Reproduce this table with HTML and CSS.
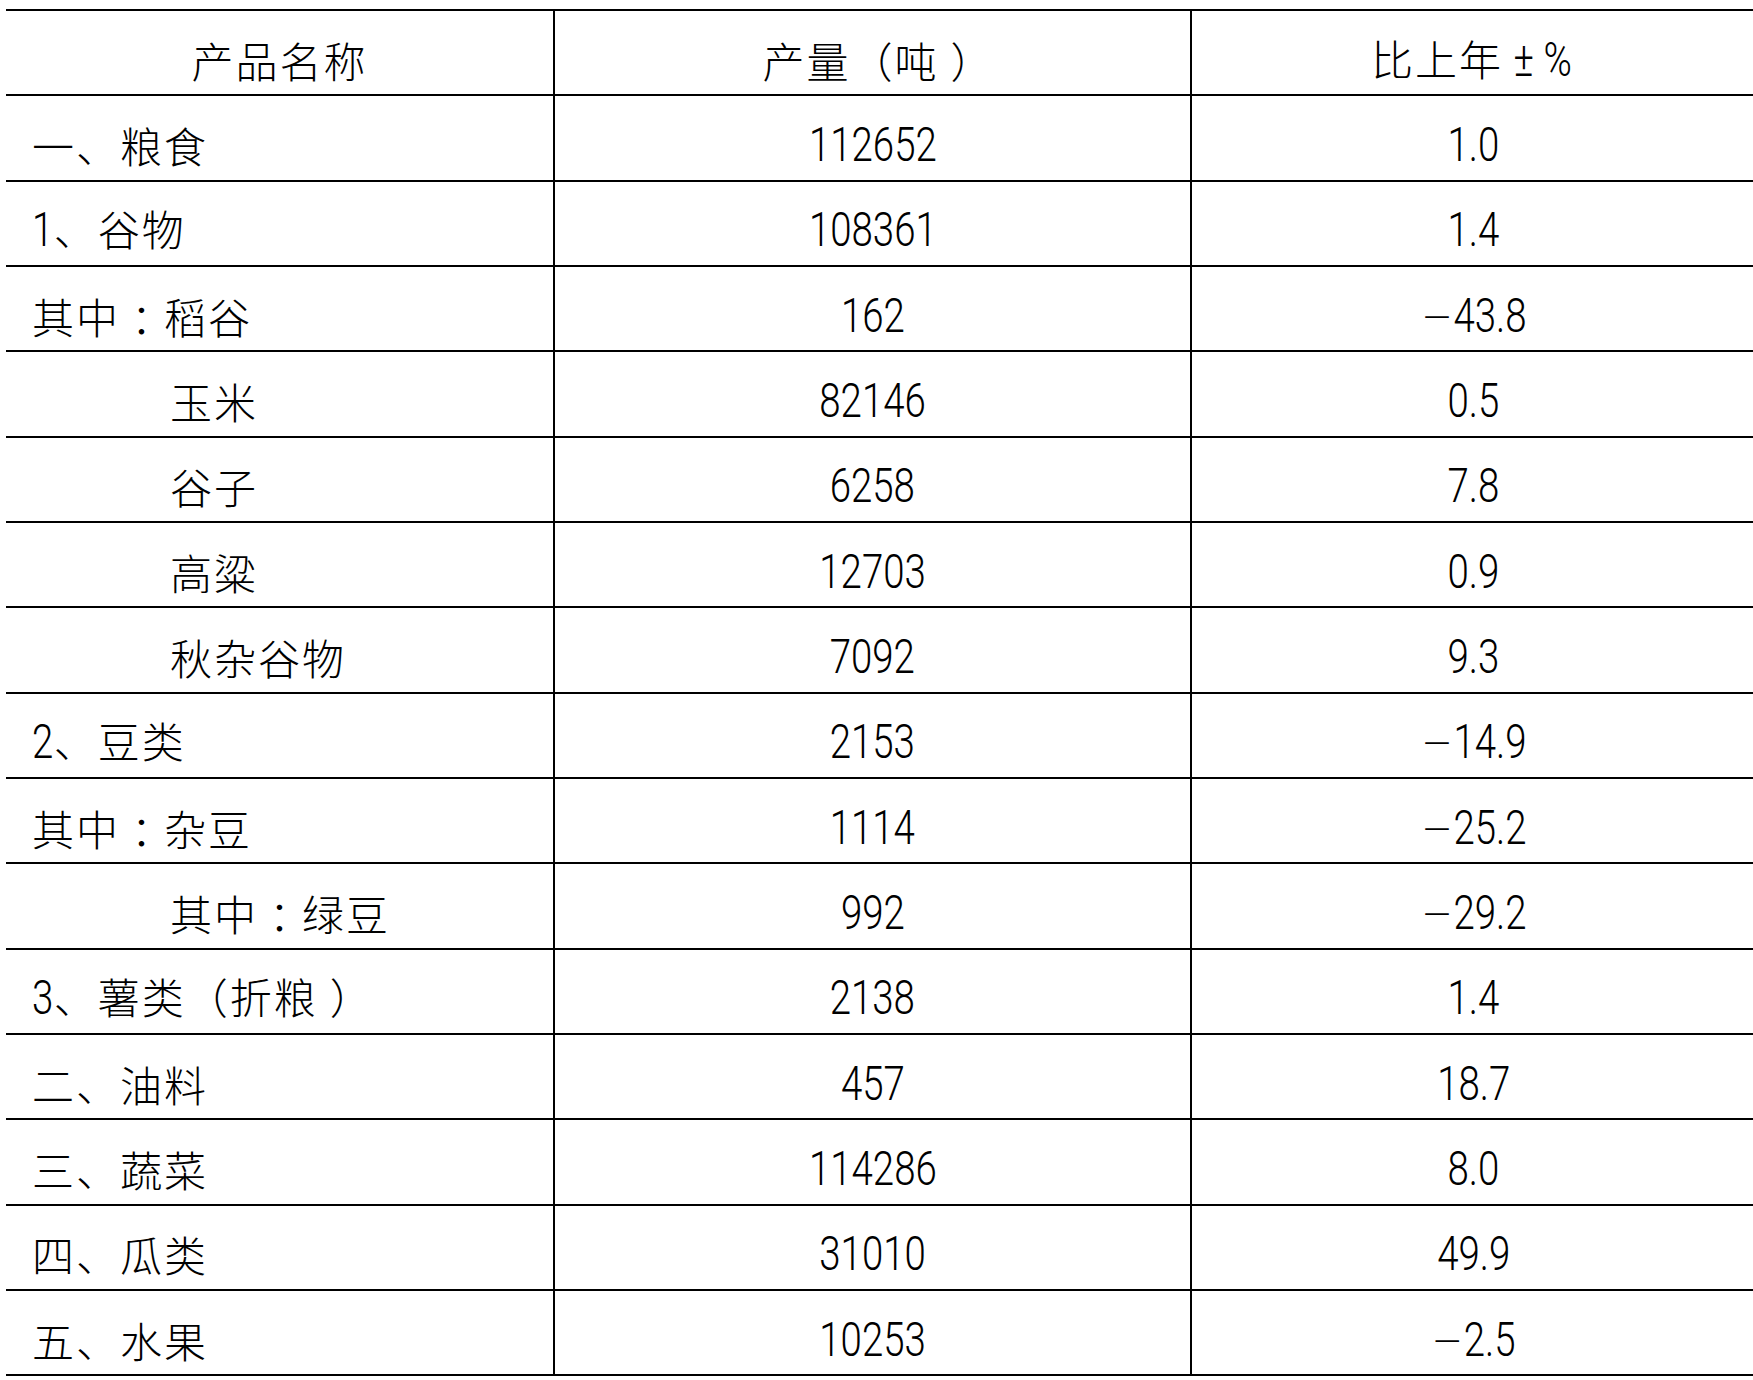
FILE: index.html
```html
<!DOCTYPE html>
<html lang="zh-CN">
<head>
<meta charset="utf-8">
<title>主要农产品产量</title>
<link rel="stylesheet" href="styles.css">
</head>
<body>
<table class="stats">
  <colgroup>
    <col class="c-name">
    <col class="c-qty">
    <col class="c-pct">
  </colgroup>
  <thead>
    <tr>
      <th>产品名称</th>
      <th>产量<span class="po">（</span>吨<span class="pc">）</span></th>
      <th>比上年<span class="n sym">±</span><span class="n">%</span></th>
    </tr>
  </thead>
  <tbody>
    <tr><td class="name">一、粮食</td><td><span class="n">112652</span></td><td><span class="n">1.0</span></td></tr>
    <tr><td class="name"><span class="n">1</span>、谷物</td><td><span class="n">108361</span></td><td><span class="n">1.4</span></td></tr>
    <tr><td class="name">其中<span class="colon">：</span>稻谷</td><td><span class="n">162</span></td><td><span class="n"><span class="m">−</span>43.8</span></td></tr>
    <tr><td class="name indent">玉米</td><td><span class="n">82146</span></td><td><span class="n">0.5</span></td></tr>
    <tr><td class="name indent">谷子</td><td><span class="n">6258</span></td><td><span class="n">7.8</span></td></tr>
    <tr><td class="name indent">高粱</td><td><span class="n">12703</span></td><td><span class="n">0.9</span></td></tr>
    <tr><td class="name indent">秋杂谷物</td><td><span class="n">7092</span></td><td><span class="n">9.3</span></td></tr>
    <tr><td class="name"><span class="n">2</span>、豆类</td><td><span class="n">2153</span></td><td><span class="n"><span class="m">−</span>14.9</span></td></tr>
    <tr><td class="name">其中<span class="colon">：</span>杂豆</td><td><span class="n">1114</span></td><td><span class="n"><span class="m">−</span>25.2</span></td></tr>
    <tr><td class="name indent">其中<span class="colon">：</span>绿豆</td><td><span class="n">992</span></td><td><span class="n"><span class="m">−</span>29.2</span></td></tr>
    <tr><td class="name"><span class="n">3</span>、薯类<span class="po">（</span>折粮<span class="pc">）</span></td><td><span class="n">2138</span></td><td><span class="n">1.4</span></td></tr>
    <tr><td class="name">二、油料</td><td><span class="n">457</span></td><td><span class="n">18.7</span></td></tr>
    <tr><td class="name">三、蔬菜</td><td><span class="n">114286</span></td><td><span class="n">8.0</span></td></tr>
    <tr><td class="name">四、瓜类</td><td><span class="n">31010</span></td><td><span class="n">49.9</span></td></tr>
    <tr><td class="name">五、水果</td><td><span class="n">10253</span></td><td><span class="n"><span class="m">−</span>2.5</span></td></tr>
  </tbody>
</table>
</body>
</html>
```
FILE: styles.css
```css
html, body {
  margin: 0;
  padding: 0;
  background: #fff;
  overflow: hidden;
}

body {
  padding: 9px 0 0 6px;
  font-family: "Noto Sans CJK SC", sans-serif;
  color: #000;
}

.stats {
  border-collapse: collapse;
  table-layout: fixed;
  width: 1749px;
}

.c-name { width: 548px; }
.c-qty { width: 637px; }
.c-pct { width: 564px; }

.stats th,
.stats td {
  height: 85.33px;
  box-sizing: border-box;
  padding: 14px 0 0 0;
  border-top: 2px solid #000;
  border-bottom: 2px solid #000;
  font-size: 42px;
  font-weight: 200;
  letter-spacing: 2px;
  line-height: 1;
  vertical-align: middle;
  text-align: center;
  white-space: nowrap;
}

.stats th + th,
.stats td + td {
  border-left: 2px solid #000;
}

.stats td.name {
  text-align: left;
  padding-left: 26px;
}

.stats td.indent {
  padding-left: 164px;
}

/* punctuation centred in its em box, as in the source document */
.colon {
  padding-left: 11px;
  letter-spacing: -9px;
}

.pc {
  padding-left: 12px;
  letter-spacing: -10px;
}

/* condensed, light numerals */
.n {
  display: inline-block;
  font-family: Roboto, "Liberation Sans", sans-serif;
  font-size: 48px;
  font-weight: 300;
  letter-spacing: 0;
  transform: scaleX(0.8);
}

.m {
  font-family: "DejaVu Sans", sans-serif;
  font-size: 47px;
  font-weight: 200;
  margin-right: 1px;
}

td.name .n {
  transform-origin: left center;
  margin-right: -5px;
}

.sym {
  margin: 0 4px 0 8px;
}
```
